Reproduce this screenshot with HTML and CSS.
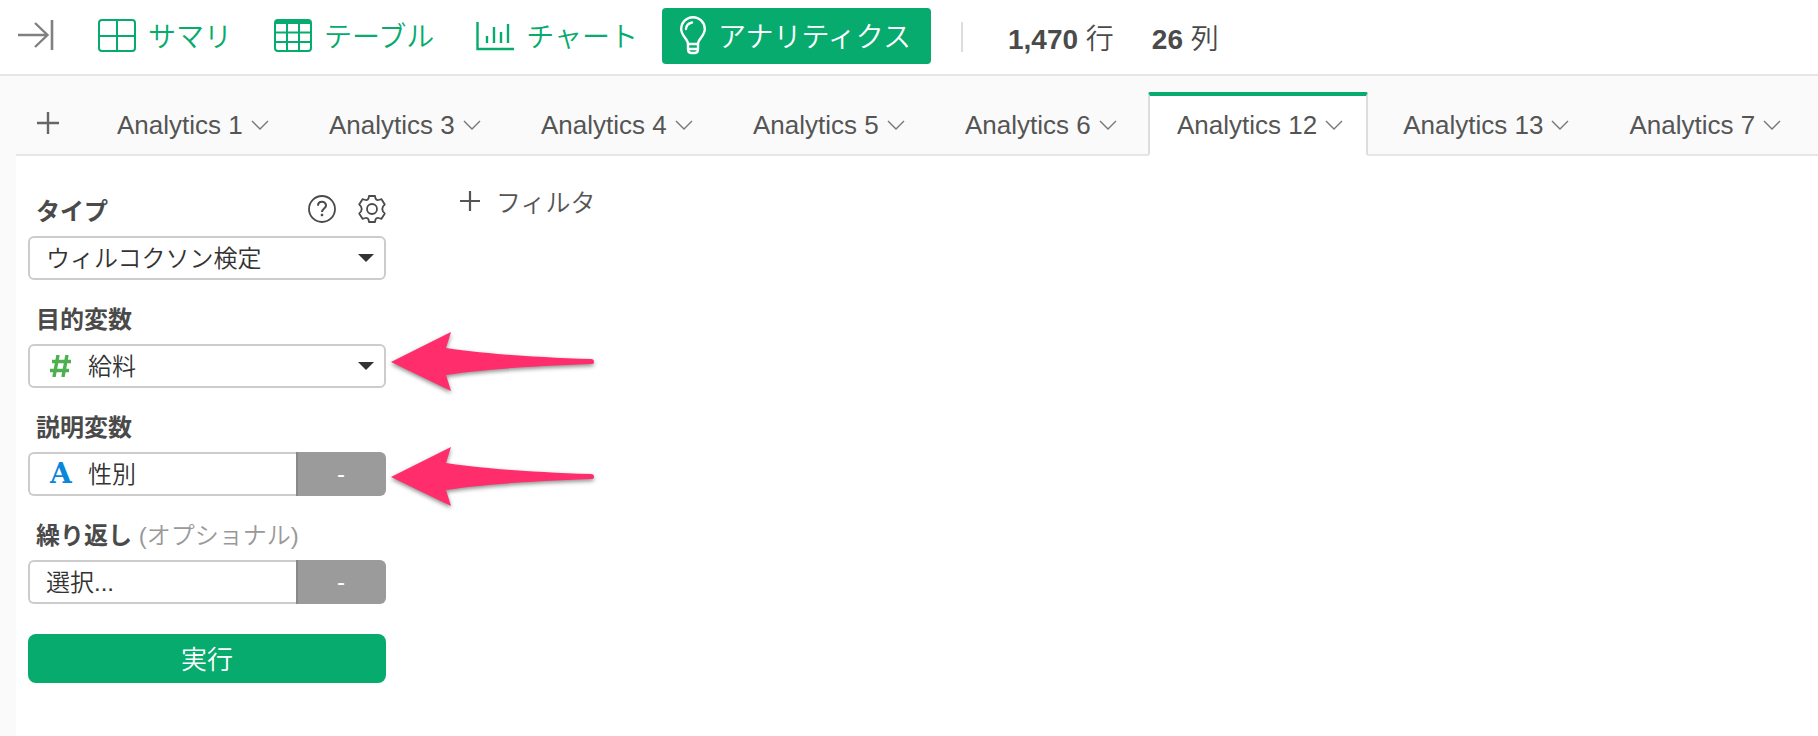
FILE: index.html
```html
<!DOCTYPE html>
<html lang="ja">
<head>
    <meta charset="UTF-8">
    <meta name="viewport" content="width=device-width, initial-scale=1.0">
    <title>アナリティクス</title>
    <link rel="stylesheet" href="styles.css">
</head>
<body>
<header class="toolbar">
    <button type="button" class="collapse" aria-label="collapse">
        <svg width="36" height="32" viewBox="0 0 36 32" fill="none" stroke="#808080" stroke-width="2.4">
            <path d="M0 16H29M17 4L29.500 16L17 28"/>
            <path d="M34 1V31" stroke-width="2.6"/>
        </svg>
    </button>
    <nav class="views">
        <button type="button" class="view">
            <svg width="38" height="34" viewBox="0 0 38 34" fill="none" stroke="currentColor" stroke-width="2">
                <rect x="1" y="2" width="36" height="31" rx="3"/>
                <path d="M1 18H37M19 2V33"/>
            </svg>
            サマリ
        </button>
        <button type="button" class="view">
            <svg width="38" height="34" viewBox="0 0 38 34" fill="none" stroke="currentColor" stroke-width="2">
                <rect x="1" y="2" width="36" height="31" rx="3"/>
                <path d="M1 14.500H37M1 24H37M13 5V33M25 5V33"/>
                <path d="M2 4H36" stroke-width="4"/>
            </svg>
            テーブル
        </button>
        <button type="button" class="view">
            <svg width="38" height="34" viewBox="0 0 38 34" fill="none" stroke="currentColor" stroke-width="2.4">
                <path d="M1.500 4V31H38"/>
                <path d="M11 18V25M18 9V25M25 14V25M32 6V25"/>
            </svg>
            チャート
        </button>
        <button type="button" class="view active">
            <svg width="26" height="40" viewBox="0 0 26 40" fill="none" stroke="currentColor" stroke-width="2.4" stroke-linejoin="round" stroke-linecap="round">
                <path d="M8 29C8 24 1.200 21 1.200 14A11.800 11.800 0 0 1 24.800 14C24.800 21 18 24 18 29Z"/>
                <path d="M8 29V34Q8 38 11 38H15Q18 38 18 34V29M8 34H18M6 14Q6.500 8.500 12 7.500"/>
            </svg>
            アナリティクス
        </button>
    </nav>
    <div class="counts">
        <span><b>1,470</b> 行</span>
        <span><b>26</b> 列</span>
    </div>
</header>

<div class="workspace">
    <nav class="tabs">
        <button type="button" class="add-tab" aria-label="add">
            <svg width="22" height="22" viewBox="0 0 22 22" stroke="#666" stroke-width="2.4"><path d="M0 11H22M11 0V22"/></svg>
        </button>
        <button type="button" class="tab">Analytics 1<svg class="chevron" width="18" height="10" viewBox="0 0 18 10"><path d="M1 1L9 9L17 1"/></svg></button>
        <button type="button" class="tab">Analytics 3<svg class="chevron" width="18" height="10" viewBox="0 0 18 10"><path d="M1 1L9 9L17 1"/></svg></button>
        <button type="button" class="tab">Analytics 4<svg class="chevron" width="18" height="10" viewBox="0 0 18 10"><path d="M1 1L9 9L17 1"/></svg></button>
        <button type="button" class="tab">Analytics 5<svg class="chevron" width="18" height="10" viewBox="0 0 18 10"><path d="M1 1L9 9L17 1"/></svg></button>
        <button type="button" class="tab">Analytics 6<svg class="chevron" width="18" height="10" viewBox="0 0 18 10"><path d="M1 1L9 9L17 1"/></svg></button>
        <button type="button" class="tab active">Analytics 12<svg class="chevron" width="18" height="10" viewBox="0 0 18 10"><path d="M1 1L9 9L17 1"/></svg></button>
        <button type="button" class="tab">Analytics 13<svg class="chevron" width="18" height="10" viewBox="0 0 18 10"><path d="M1 1L9 9L17 1"/></svg></button>
        <button type="button" class="tab">Analytics 7<svg class="chevron" width="18" height="10" viewBox="0 0 18 10"><path d="M1 1L9 9L17 1"/></svg></button>
    </nav>

    <main class="content">
        <form class="settings">
            <div class="label-row">
                <label for="type">タイプ</label>
                <div class="tools">
                    <button type="button" aria-label="help">
                        <svg width="28" height="28" viewBox="0 0 28 28" fill="none" stroke="#4a4a4a" stroke-width="1.8">
                            <circle cx="14" cy="14" r="13"/>
                            <path d="M10 10.800C10 5.500 18 5.500 18 10.500C18 13.500 14 13.500 14 17" stroke-width="2"/>
                            <path d="M14 18.800V21.200" stroke-width="2.400"/>
                        </svg>
                    </button>
                    <button type="button" aria-label="settings">
                        <svg width="28" height="28" viewBox="0 0 28 28" fill="none" stroke="#4a4a4a" stroke-width="1.8" stroke-linejoin="round">
                            <circle cx="14" cy="14" r="5"/>
                            <path d="M11 1H17L17.500 3.500Q18.500 5.500 20.500 5L23.500 4.200L26.800 9.500L25 11.500Q23.500 14 25 16.500L26.800 18.500L23.500 23.800L20.500 23Q18.500 22.500 17.500 24.500L17 27H11L10.500 24.500Q9.500 22.500 7.500 23L4.500 23.800L1.200 18.500L3 16.500Q4.500 14 3 11.500L1.200 9.500L4.500 4.200L7.500 5Q9.500 5.500 10.500 3.500Z"/>
                        </svg>
                    </button>
                </div>
            </div>
            <div class="field">
                <select id="type"><option>ウィルコクソン検定</option></select>
                <svg class="caret" width="16" height="8" viewBox="0 0 16 8"><path d="M0 0H16L8 8Z"/></svg>
            </div>

            <div class="label-row"><label for="target">目的変数</label></div>
            <div class="field">
                <select id="target" class="with-icon"><option>給料</option></select>
                <svg class="type-icon" width="22" height="22" viewBox="0 0 22 22" fill="none" stroke="#4caf50" stroke-width="3.4"><path d="M8 0L4 22M17 0L13 22M2 6.500H21M0 15.500H19"/></svg>
                <svg class="caret" width="16" height="8" viewBox="0 0 16 8"><path d="M0 0H16L8 8Z"/></svg>
                <svg class="arrow arrow-target" width="206" height="64" viewBox="0 0 206 64"><path d="M1 30L61 0L56 16C95 22 145 25 201 27Q204 27 204 30Q204 32 201 32C145 34 95 37 56 43L61 59Z"/></svg>
            </div>

            <div class="label-row"><label for="predictor">説明変数</label></div>
            <div class="field">
                <select id="predictor" class="with-icon joined"><option>性別</option></select>
                <span class="type-icon letter">A</span>
                <button type="button" class="remove">-</button>
                <svg class="arrow arrow-predictor" width="206" height="64" viewBox="0 0 206 64"><path d="M1 30L61 0L56 16C95 22 145 25 201 27Q204 27 204 30Q204 32 201 32C145 34 95 37 56 43L61 59Z"/></svg>
            </div>

            <div class="label-row"><label for="repeat">繰り返し <span class="optional">(オプショナル)</span></label></div>
            <div class="field">
                <select id="repeat" class="joined"><option>選択...</option></select>
                <button type="button" class="remove">-</button>
            </div>

            <button type="submit" class="run">実行</button>
        </form>

        <section class="result">
            <button type="button" class="filter">
                <svg width="20" height="20" viewBox="0 0 20 20" stroke="#555" stroke-width="2.2"><path d="M0 10H20M10 0V20"/></svg>
                フィルタ
            </button>
        </section>
    </main>
</div>
</body>
</html>
```

FILE: styles.css
```css
* {
    box-sizing: border-box;
}

body {
    margin: 0;
    min-height: 100vh;
    display: flex;
    flex-direction: column;
    background: #fff;
    color: #4a4a4a;
    font-family: "Liberation Sans", "Noto Sans CJK JP", sans-serif;
    font-size: 24px;
    overflow-x: hidden;
}

button {
    margin: 0;
    padding: 0;
    border: 0;
    background: none;
    color: inherit;
    font: inherit;
    cursor: pointer;
}

svg {
    display: block;
    flex: none;
}

/* Toolbar */
.toolbar {
    display: flex;
    align-items: center;
    height: 76px;
    padding-left: 18px;
    border-bottom: 2px solid #e6e6e6;
    white-space: nowrap;
}

.collapse {
    margin-right: 26px;
    padding-bottom: 4px;
}

.views {
    display: flex;
    gap: 6px;
}

.view {
    display: flex;
    align-items: center;
    gap: 12px;
    height: 56px;
    margin-bottom: 2px;
    padding: 0 18px 2px;
    border-radius: 4px;
    color: #06ab6d;
    font-family: "Noto Sans CJK JP", sans-serif;
    font-size: 28px;
    font-weight: 350;
    line-height: 40px;
}

.view.active {
    padding-right: 20px;
    background: #06ab6d;
    color: #fff;
}

.counts {
    display: flex;
    align-items: center;
    gap: 38px;
    height: 30px;
    margin-left: 30px;
    padding-left: 45px;
    border-left: 2px solid #ddd;
    font-size: 28px;
    font-weight: 350;
}

.counts b {
    font-weight: 700;
}

/* Tabs */
.workspace {
    flex: 1;
    display: flex;
    flex-direction: column;
    padding-left: 16px;
    background: #fafafa;
}

.tabs {
    display: flex;
    align-items: flex-end;
    gap: 6px;
    height: 80px;
    border-bottom: 2px solid #e6e6e6;
}

.add-tab {
    height: 64px;
    margin-right: 23px;
    padding: 2px 0 0 21px;
}

.tab {
    display: flex;
    align-items: center;
    gap: 8px;
    flex: none;
    min-width: 206px;
    height: 64px;
    margin-bottom: -2px;
    padding: 0 23px 0 27px;
    border: 2px solid transparent;
    border-top-width: 4px;
    color: #555;
    font-size: 26px;
    white-space: nowrap;
}

.tab.active {
    border-color: #06ab6d #ddd #fff;
    border-radius: 2px 2px 0 0;
    background: #fff;
}

.chevron {
    fill: none;
    stroke: #777;
    stroke-width: 1.4;
}

/* Content */
.content {
    flex: 1;
    display: flex;
    background: #fff;
}

.settings {
    flex: none;
    width: 370px;
    padding: 16px 0 0 12px;
}

.label-row {
    display: flex;
    align-items: center;
    justify-content: space-between;
    height: 34px;
    margin: 20px 0 10px;
    padding-left: 8px;
    font-weight: 600;
}

.optional {
    color: #999;
    font-weight: 350;
}

.tools {
    display: flex;
    gap: 22px;
}

.field {
    position: relative;
    display: flex;
    height: 44px;
}

.field select {
    appearance: none;
    flex: 1;
    min-width: 0;
    height: 44px;
    margin: 0;
    padding: 0 16px;
    border: 2px solid #ccc;
    border-radius: 6px;
    background: #fff;
    color: #333;
    font: inherit;
    font-weight: 350;
}

.field .with-icon {
    padding-left: 58px;
}

.field .joined {
    border-right: 0;
    border-radius: 6px 0 0 6px;
}

.caret {
    position: absolute;
    top: 18px;
    right: 12px;
    fill: #333;
    pointer-events: none;
}

.type-icon {
    position: absolute;
    top: 11px;
    left: 22px;
    pointer-events: none;
}

.letter {
    top: 8px;
    color: #0a87d8;
    font-family: "DejaVu Serif", serif;
    font-size: 28px;
    font-weight: bold;
    line-height: 28px;
}

.remove {
    width: 90px;
    padding-right: 2px;
    border-left: 2px solid #888;
    border-radius: 0 6px 6px 0;
    background: #9b9b9b;
    color: #fff;
}

.run {
    width: 100%;
    height: 49px;
    margin-top: 30px;
    padding-bottom: 2px;
    border-radius: 8px;
    background: #06ab6d;
    color: #fff;
    font-size: 26px;
    font-weight: 350;
}

/* Pointers beside the variable fields */
.arrow {
    position: absolute;
    left: 100%;
    margin-left: 4px;
    fill: #ff2d6b;
    filter: drop-shadow(0 2px 2px rgba(0, 0, 0, 0.45));
    pointer-events: none;
}

.arrow-target {
    top: -12px;
}

.arrow-predictor {
    top: -5px;
}

.result {
    flex: 1;
    padding: 26px 0 0 74px;
}

.filter {
    display: flex;
    align-items: center;
    gap: 16px;
    height: 38px;
    color: #555;
    font-size: 25px;
    font-weight: 350;
}
```
